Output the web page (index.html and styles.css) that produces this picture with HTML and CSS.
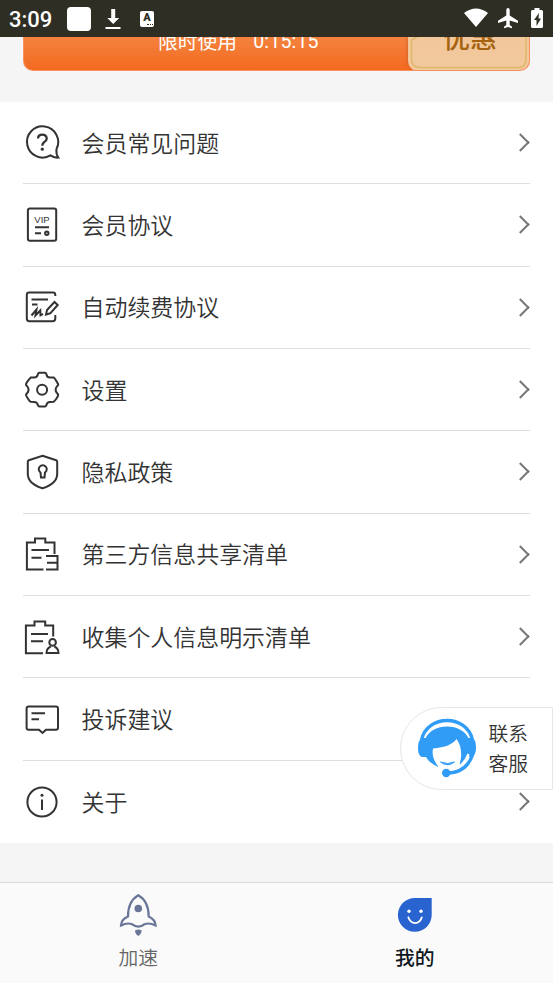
FILE: index.html
```html
<!DOCTYPE html>
<html lang="zh-CN">
<head>
<meta charset="utf-8">
<title>我的</title>
<link rel="stylesheet" href="styles.css">
</head>
<body>
<div class="app">
  <header class="status">
    <span class="clock">3:09</span>
    <span class="square"></span>
    <svg class="download" width="16" height="22" viewBox="0 0 16 22"><path d="M6.200 1h4v9h4L8.200 16 2.300 10h3.900zM.5 19h15v2H.5z" fill="#fff"/></svg>
    <span class="letter">A<i></i></span>
    <svg class="system" width="82" height="24" viewBox="463 6 82 24" fill="#fff">
      <path d="M464 13q12-9 24 0L476 27z"/>
      <path d="M506.300 10q0-2 1.700-2t1.700 2v5.500l8.300 5.200V23l-8.300-2.500v4.500l2.300 1.700v1.600l-4-1.200-4 1.200v-1.600l2.300-1.700v-4.500L498 23v-2.300l8.300-5.200z"/>
      <path fill-rule="evenodd" d="M534.500 8h5v2h2q1.500 0 1.500 1.500v15q0 1.500-1.500 1.500h-9q-1.500 0-1.500-1.500v-15q0-1.500 1.500-1.500h2zM539 13l-5 7h2.500v6l4.500-7.500h-2.500z"/>
    </svg>
  </header>
  <section class="promo">
    <div class="banner"><span>限时使用</span><span class="timer">0:15:15</span>
      <div class="coupon">
        <svg width="122" height="34" viewBox="0 0 122 34" fill="none"><path d="M9 0L3.500 3V22Q3.500 30.500 12 30.500H110Q118 30.500 118 22V0" stroke="#dfb768" stroke-width="1.500"/></svg>
        <b>优惠</b>
      </div>
    </div>
  </section>
  <main class="list">
    <div class="row"><svg class="icon" viewBox="0 0 40 40"><path d="M34.500 26A15.600 15.600 0 1 0 28.500 32.400Q32 35 36.300 34.600Q33.800 31 34.500 26"/><path d="M16 15.500Q16.200 11.700 20.300 11.700T24.700 15.400Q24.700 17.500 22.300 19Q20.300 20.300 20.300 22.800" stroke-width="2.300"/><circle class="dot" cx="20.300" cy="26.200" r="1.600"/></svg><span>会员常见问题</span><i class="chevron"></i></div>
    <div class="row"><svg class="icon" viewBox="0 0 40 40"><rect x="5.900" y="3.500" width="28.300" height="32.300" rx="2"/><text x="20" y="17.600" text-anchor="middle">VIP</text><path d="M13 22.300H27M13 28.200H19"/><circle cx="24.800" cy="28.200" r="1.700"/></svg><span>会员协议</span><i class="chevron"></i></div>
    <div class="row"><svg class="icon" viewBox="0 0 40 40"><path d="M33.300 9V8Q33.300 5.600 31 5.600H7Q4.800 5.600 4.800 8V31.500Q4.800 34.200 7.400 34.200H30.600Q33.300 34.200 33.300 31.500V28M9.500 12.600H26M10 17.600H15.500"/><path d="M9.500 28.500L14.500 22.500L13.500 28.500L18.300 23.500L18.500 28.300L21 26.800" stroke-width="2"/><path d="M24 27.600L25 23L32.500 15L35.700 18L28.200 26.300Z"/></svg><span>自动续费协议</span><i class="chevron"></i></div>
    <div class="row"><svg class="icon" viewBox="0 0 40 40"><path d="M17.500 2.800H23Q24 2.800 24.500 4.500Q25 7.500 28 7.500L31.500 7.600Q32.500 7.800 34.500 11.200T36.200 14.500Q36.200 15.500 34.800 16.500Q32.500 19.700 34.800 22.900Q36.200 24 36.200 25T34.500 28.500T31.500 31.800L28 31.900Q25 32 24.500 34.900Q24 36.500 23 36.500H17.500Q16.300 36.500 15.800 34.900Q15.200 32 12.200 31.900L8.700 31.800Q7.600 31.500 5.700 28.300T4 25Q4 24 5.400 22.900Q7.700 19.700 5.400 16.500Q4 15.500 4 14.500T5.700 11.200T8.700 7.600L12.200 7.500Q15.200 7.500 15.800 4.500Q16.200 2.800 17.500 2.800Z"/><circle cx="20.100" cy="19.700" r="5"/></svg><span>设置</span><i class="chevron"></i></div>
    <div class="row"><svg class="icon" viewBox="0 0 40 40"><path d="M20.500 3.800L34.200 8.200Q35.200 8.600 35.200 9.800V22C35.200 28 30.500 33 20.500 36.300C10.500 33 5.800 28 5.800 22V9.800Q5.800 8.600 6.800 8.200Z"/><path d="M18.500 20.500A4 4 0 1 1 23 20.500L22.500 25.500H19Z"/></svg><span>隐私政策</span><i class="chevron"></i></div>
    <div class="row"><svg class="icon" viewBox="0 0 40 40"><path d="M21.500 35.600H4.900V8.500H13V4.500H23.300V8.500H32.500V20M9.500 16H27M9.500 23.800H19.500M24 22H35.500V35.500H24M25 28.700H35"/></svg><span>第三方信息共享清单</span><i class="chevron"></i></div>
    <div class="row"><svg class="icon" viewBox="0 0 40 40"><path d="M21 36.200H3.900V8.500H12.500V4.500H23.200V8.500H31.200V19.500M9 17H26M9 24.200H21"/><circle cx="30.600" cy="25.400" r="3.300"/><path d="M28.800 29.500Q24.500 31.300 24.500 36H36.500Q36.500 31.300 32.400 29.500"/></svg><span>收集个人信息明示清单</span><i class="chevron"></i></div>
    <div class="row"><svg class="icon" viewBox="0 0 40 40"><path d="M6.500 7.500H34Q36 7.500 36 9.500V28.700Q36 30.700 34 30.700H24L20.500 34L17 30.700H6.500Q4.600 30.700 4.600 28.700V9.500Q4.600 7.500 6.500 7.500ZM9.500 14.300H23M9.500 20.300H17"/></svg><span>投诉建议</span><i class="chevron"></i></div>
    <div class="row"><svg class="icon" viewBox="0 0 40 40"><circle cx="20" cy="20" r="14.600"/><path d="M20 17.500V28"/><circle class="dot" cx="20" cy="13.300" r="1.500"/></svg><span>关于</span><i class="chevron"></i></div>
  </main>
  <nav class="tabs">
    <div class="tab">
      <svg width="40" height="44" viewBox="118 893 40 44"><path d="M138.300 895.200C131.500 899 128 906 128 916.500C123.500 918.500 121.200 921.500 121 925.500C125 923.500 129 923 132 924.200Q135 926.700 138.300 926.700T144.600 924.200C147.600 923 151.600 923.500 155.600 925.500C155.400 921.500 153 918.500 148.700 916.500C148.700 906 145 899 138.300 895.200Z" fill="none" stroke="#6a7698" stroke-width="2.200"/><circle cx="138.300" cy="908.500" r="3.800" fill="#6a7698"/><path d="M135.200 930.200Q138.300 928.700 141.500 930.200Q142 933.500 138.300 936Q134.600 933.500 135.200 930.200" fill="#6a7698"/></svg>
      <span>加速</span>
    </div>
    <div class="tab active">
      <svg width="40" height="44" viewBox="395 893 40 44"><path d="M415 898H431.700V915A16.900 16.900 0 1 1 415 898Z" fill="#2863d0"/><circle cx="409" cy="911.300" r="1.700" fill="#fff"/><circle cx="421" cy="911.300" r="1.700" fill="#fff"/><path d="M408.300 917.300C411 925 419.500 925 421.800 917.300" fill="none" stroke="#fff" stroke-width="1.800" stroke-linecap="round"/></svg>
      <span>我的</span>
    </div>
  </nav>
  <aside class="service">
    <svg width="60" height="60" viewBox="417 718 60 60"><path d="M421.500 740C427 714 467 714 472.500 740" fill="none" stroke="#309cf6" stroke-width="3.400"/><path d="M425.500 738C430 730.500 437 726.500 447 726.500S465 731 468.500 738V751Q466 762 460.500 767Q459 765.500 461 758Q462 746 456.500 739Q451 747 433 748.500Q431 757 438.500 767Q429 763 426 757H422Q418 756 418 748T422 738Z" fill="#309cf6"/><path d="M467 738H472Q476 739 476 747T472 757L470 757L467 755Z" fill="#309cf6"/><path d="M472.500 755Q466 773 447 773" fill="none" stroke="#309cf6" stroke-width="3.400"/><path d="M468.500 754Q464 766 454 769" fill="none" stroke="#fff" stroke-width="2.200"/><circle cx="446.200" cy="773" r="4.200" fill="#309cf6"/><path d="M440.500 762Q447.500 767.500 454.500 762Q448 765 440.500 762Z" fill="#309cf6" stroke="#309cf6"/></svg>
    <span>联系<br>客服</span>
  </aside>
</div>
</body>
</html>
```
FILE: styles.css
```css
* { box-sizing: border-box; }
body { margin: 0; background: #f5f5f5; color: #333; font-family: "Noto Sans CJK SC", sans-serif; }
.app { position: relative; width: 553px; height: 983px; display: flex; flex-direction: column; overflow: hidden; }
.status { height: 37px; flex: none; background: #2f2e24; color: #fff; display: flex; align-items: center; padding: 0 8px 0 9px; }
.clock { width: 58px; font: 500 22px/37px Roboto, sans-serif; padding-top: 1px; }
.square { width: 24px; height: 24px; border-radius: 4px; background: #fff; }
.download { margin-left: 14px; }
.letter { display: flex; flex-direction: column; align-items: center; width: 14px; height: 16px; margin-left: 19px; border-radius: 2px; background: #fff; color: #2f2e24; font: 900 11px/13px Roboto, sans-serif; }
.letter i { width: 6px; border-top: 1px dotted #2f2e24; margin-left: 5px; }
.system { margin-left: auto; margin-top: -1px; }
.promo { height: 65px; flex: none; padding: 0 23px; overflow: hidden; }
.banner { position: relative; height: 34px; border-radius: 0 0 10px 10px; border: solid #f79260; border-width: 0 1px 1px; background: linear-gradient(#f4823e, #f36a20); color: #fff; overflow: hidden; padding-left: 134px; display: flex; gap: 16px; font-size: 19.800px; line-height: 28px; }
.banner > span { margin-top: -10px; }
.banner > .timer { margin-top: -9px; font-family: Roboto, sans-serif; font-size: 19.500px; letter-spacing: .2px; }
.coupon { position: absolute; right: -1px; top: 0; width: 122px; height: 34px; border-radius: 0 0 10px 10px; background: linear-gradient(#f2c79a, #f2c89f); overflow: hidden; box-shadow: -1px 0 3px #d6662b; }
.coupon svg { display: block; }
.coupon b { position: absolute; left: 35px; top: -18px; color: #a5620f; font-size: 27px; line-height: 36px; font-weight: 500; }
.list { height: 741px; flex: none; background: #fff; padding: 0 23px; display: grid; grid-template-rows: repeat(9, 1fr); }
.row { display: flex; align-items: center; border-bottom: 1px solid #dedede; font-size: 22.950px; line-height: 34px; font-weight: 350; }
.row > span { margin: -2px 0 0 -.5px; }
.row:last-child { border-bottom: 0; }
.icon { width: 40px; height: 40px; margin: 0 20px 0 -1px; fill: none; stroke: #333; stroke-width: 2; }
.icon .dot { fill: #333; stroke: none; }
.icon text { fill: #333; stroke: none; font: 9.500px "Liberation Sans", sans-serif; }
.chevron { width: 13px; height: 13px; margin-left: auto; margin-right: 3px; border: solid #777; border-width: 2px 2px 0 0; transform: rotate(45deg); }
.tabs { margin-top: 39px; height: 101px; flex: none; background: #fafafa; border-top: 1px solid #d9d9d9; display: grid; grid-template-columns: 1fr 1fr; }
.tab { display: flex; flex-direction: column; align-items: center; padding-top: 10px; font-size: 19.800px; line-height: 30px; color: #666; font-weight: 350; }
.tab span { margin-top: 5px; }
.tab.active { color: #111820; font-weight: 500; }
.service { position: absolute; right: 0; top: 706.500px; width: 153.500px; height: 83px; border: 1.500px solid #e6e6e6; border-radius: 42px 0 0 42px; background: #fff; display: flex; align-items: center; gap: 12px; padding-left: 16px; font-size: 19.800px; line-height: 29.500px; font-weight: 350; }
.service span { margin-top: -1px; }
```
